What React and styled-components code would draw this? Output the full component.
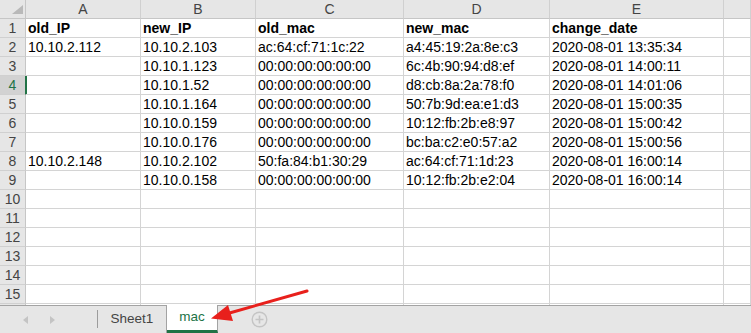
import React from "react";
import styled, { createGlobalStyle } from "styled-components";

const Global = createGlobalStyle`
  html, body { margin: 0; padding: 0; background: #fff; }
  body { font-family: "Liberation Sans", Arial, sans-serif; }
`;

const Window = styled.div`
  position: relative;
  width: 751px;
  height: 333px;
  display: flex;
  flex-direction: column;
  overflow: hidden;
  background: #fff;
`;

const Sheet = styled.div`
  height: 305px;
  overflow: hidden;
  display: grid;
  grid-template-columns: 26px 115px 115px 148px 146px 174px 1fr;
  grid-auto-rows: 19px;
`;

const Corner = styled.div`
  position: relative;
  background: #e6e6e6;
  border-right: 1px solid #c6c6c6;
  border-bottom: 1px solid #c6c6c6;
  &::after {
    content: "";
    position: absolute;
    left: 12px;
    top: 5px;
    width: 11px;
    height: 9px;
    background: #b9b9b9;
    clip-path: polygon(100% 0, 100% 100%, 0 100%);
  }
`;

const ColHeader = styled.div`
  background: #e6e6e6;
  border-right: 1px solid #d0d0d0;
  border-bottom: 1px solid #c6c6c6;
  color: #444;
  font-size: 14px;
  line-height: 18px;
  text-align: center;
`;

const RowHeader = styled.div`
  background: ${(p) => (p.$active ? "#d2d2d2" : "#e6e6e6")};
  border-right: 1px solid ${(p) => (p.$active ? "#217346" : "#c6c6c6")};
  border-bottom: 1px solid #d0d0d0;
  color: ${(p) => (p.$active ? "#217346" : "#444")};
  font-size: 14px;
  line-height: 18px;
  text-align: center;
`;

const Cell = styled.div`
  border-right: 1px solid #d4d4d4;
  border-bottom: 1px solid #d4d4d4;
  padding-left: 2px;
  font-size: 14px;
  line-height: 18px;
  color: #000;
  font-weight: ${(p) => (p.$bold ? 700 : 400)};
  white-space: nowrap;
  overflow: hidden;
  box-shadow: ${(p) => (p.$activeLeft ? "inset 1px 0 0 #217346" : "none")};
`;

const TabBar = styled.div`
  flex: 1;
  display: flex;
  align-items: stretch;
  background: #e6e6e6;
  border-top: 1px solid #a3a3a3;
`;

const Nav = styled.div`
  width: 97px;
  display: flex;
  align-items: center;
  padding-left: 23px;
  gap: 22px;
  box-sizing: border-box;
`;

const NavArrow = styled.span`
  width: 0;
  height: 0;
  border-top: 4px solid transparent;
  border-bottom: 4px solid transparent;
  ${(p) =>
    p.$dir === "left"
      ? "border-right: 5px solid #c4c4c4;"
      : "border-left: 5px solid #c4c4c4;"}
`;

const Separator = styled.div`
  width: 1px;
  background: #9c9c9c;
  margin: 4px 0 5px;
`;

const Tab = styled.div`
  width: ${(p) => p.$w}px;
  display: flex;
  align-items: center;
  justify-content: center;
  padding-bottom: 3px;
  box-sizing: border-box;
  border-right: 1px solid #a3a3a3;
  font-size: 13.5px;
  color: ${(p) => (p.$active ? "#217346" : "#444")};
  background: ${(p) => (p.$active ? "#fff" : "transparent")};
  margin-top: ${(p) => (p.$active ? "-1px" : "0")};
  border-bottom: ${(p) => (p.$active ? "3px solid #217346" : "none")};
`;

const AddButton = styled.div`
  margin-left: 33px;
  display: flex;
  align-items: center;
  padding-bottom: 1px;
`;

const Overlay = styled.svg`
  position: absolute;
  left: 0;
  top: 0;
  pointer-events: none;
`;

const cols = ["A", "B", "C", "D", "E", ""];
const zero = "00:00:00:00:00:00";
const data = [
  ["old_IP", "new_IP", "old_mac", "new_mac", "change_date"],
  ["10.10.2.112", "10.10.2.103", "ac:64:cf:71:1c:22", "a4:45:19:2a:8e:c3", "2020-08-01 13:35:34"],
  ["", "10.10.1.123", zero, "6c:4b:90:94:d8:ef", "2020-08-01 14:00:11"],
  ["", "10.10.1.52", zero, "d8:cb:8a:2a:78:f0", "2020-08-01 14:01:06"],
  ["", "10.10.1.164", zero, "50:7b:9d:ea:e1:d3", "2020-08-01 15:00:35"],
  ["", "10.10.0.159", zero, "10:12:fb:2b:e8:97", "2020-08-01 15:00:42"],
  ["", "10.10.0.176", zero, "bc:ba:c2:e0:57:a2", "2020-08-01 15:00:56"],
  ["10.10.2.148", "10.10.2.102", "50:fa:84:b1:30:29", "ac:64:cf:71:1d:23", "2020-08-01 16:00:14"],
  ["", "10.10.0.158", zero, "10:12:fb:2b:e2:04", "2020-08-01 16:00:14"],
];

export default function App() {
  const rows = [];
  for (let r = 1; r <= 16; r++) {
    const vals = data[r - 1] || [];
    rows.push(
      <React.Fragment key={r}>
        <RowHeader $active={r === 4}>{r <= 15 ? r : ""}</RowHeader>
        {cols.map((c, i) => (
          <Cell key={i} $bold={r === 1} $activeLeft={r === 4 && i === 0}>
            {vals[i] || ""}
          </Cell>
        ))}
      </React.Fragment>
    );
  }
  return (
    <>
      <Global />
      <Window>
        <Sheet>
          <Corner />
          {cols.map((c, i) => (
            <ColHeader key={i}>{c}</ColHeader>
          ))}
          {rows}
        </Sheet>
        <TabBar>
          <Nav>
            <NavArrow $dir="left" />
            <NavArrow $dir="right" />
          </Nav>
          <Separator />
          <Tab $w={69}>Sheet1</Tab>
          <Tab $w={51} $active>
            mac
          </Tab>
          <AddButton>
            <svg width="17" height="17" viewBox="0 0 17 17">
              <circle cx="8.5" cy="8.5" r="7.3" fill="none" stroke="#c4c4c4" strokeWidth="1.4" />
              <path d="M8.5 4.5v8M4.5 8.5h8" stroke="#c4c4c4" strokeWidth="1.6" />
            </svg>
          </AddButton>
        </TabBar>
        <Overlay width="751" height="333" viewBox="0 0 751 333">
          <line x1="307" y1="291" x2="226" y2="314" stroke="#e8201c" strokeWidth="3" strokeLinecap="round" />
          <polygon points="211,318.5 228,305 233,321" fill="#e8201c" />
        </Overlay>
      </Window>
    </>
  );
}
